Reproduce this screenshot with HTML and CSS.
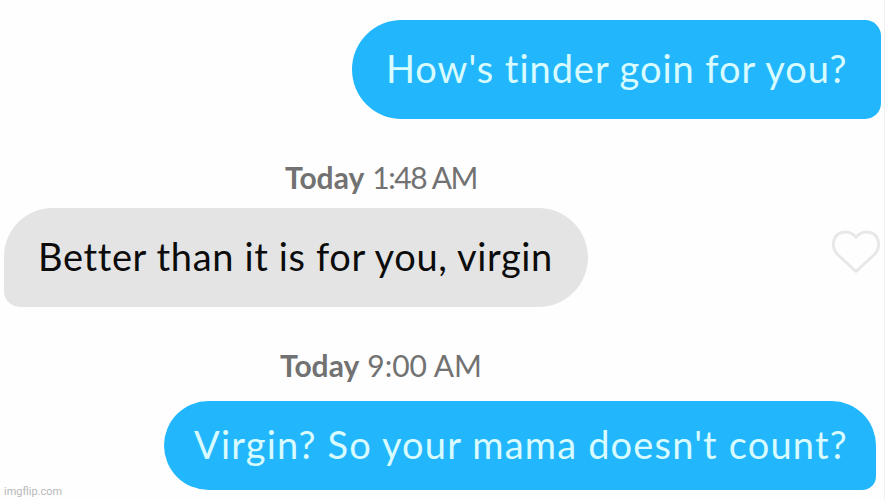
FILE: index.html
```html
<!DOCTYPE html>
<html lang="en">
  <head>
    <meta charset="UTF-8" />
    <meta name="viewport" content="width=device-width, initial-scale=1.0" />
    <title>Chat</title>
    <link rel="stylesheet" href="styles.css">
  </head>
  <body>
    <div class="chat">
      <div class="bubble sent first"><p>How's tinder goin for you?</p></div>

      <div class="timestamp"><b>Today</b><span>1:48 AM</span></div>

      <div class="row">
        <div class="bubble received"><p>Better than it is for you, virgin</p></div>
        <svg class="heart" viewBox="0 0 50 46">
          <path d="M25 42.500 L6.500 25.500 C-1 17 2 3 14.500 3 C19 3 22.500 5 25 8.500 C27.500 5 31 3 35.500 3 C48 3 51 17 43.500 25.500 Z" />
        </svg>
      </div>

      <div class="timestamp second"><b>Today</b><span>9:00 AM</span></div>

      <div class="bubble sent last"><p>Virgin? So your mama doesn't count?</p></div>

      <div class="watermark">imgflip.com</div>
    </div>
  </body>
</html>
```

FILE: styles.css
```css
* {
  margin: 0;
  box-sizing: border-box;
}

body {
  font-family: Lato, "Liberation Sans", sans-serif;
  background-color: #fefefe;
}

.chat {
  position: relative;
  width: 885px;
  height: 500px;
  padding-top: 20px;
  display: flex;
  flex-flow: column;
  overflow: hidden;
  border-right: 1px solid #f0f0f3;
}

.bubble {
  display: flex;
  align-items: center;
  height: 99px;
  padding-bottom: 3px;
  font-size: 38px;
  line-height: 46px;
  white-space: nowrap;
}

.sent {
  align-self: flex-end;
  background-color: #22b7fd;
  color: #d8fbff;
}

.first {
  width: 529px;
  margin-right: 3px;
  padding-left: 34px;
  border-radius: 50px 16px 16px 50px;
  letter-spacing: 0.95px;
}

.received {
  width: 584px;
  padding-left: 34px;
  border-radius: 49px 50px 50px 16px;
  background-color: #e4e4e4;
  color: #0c0c0c;
  letter-spacing: 0.63px;
}

.last {
  width: 712px;
  height: 89px;
  margin-right: 8px;
  padding-left: 30px;
  border-radius: 45px 45px 14px 45px;
  letter-spacing: 1.17px;
}

.row {
  display: flex;
  justify-content: space-between;
  align-items: center;
  padding: 0 3px 0 4px;
}

.heart {
  width: 50px;
  height: 46px;
  margin-top: -11px;
  fill: none;
  stroke: #e8e8e8;
  stroke-width: 3;
  stroke-linejoin: round;
}

.timestamp {
  display: flex;
  gap: 8px;
  height: 89px;
  padding: 40px 0 0 285px;
  font-size: 30px;
  line-height: 36px;
  color: #727272;
}

.timestamp span {
  letter-spacing: -1.4px;
}

.second {
  height: 94px;
  padding-left: 280px;
}

.second span {
  letter-spacing: 0;
}

.watermark {
  position: absolute;
  left: 4px;
  bottom: 2px;
  font-family: Roboto, sans-serif;
  font-size: 11px;
  line-height: 13px;
  color: #b8b8b8;
}
```
